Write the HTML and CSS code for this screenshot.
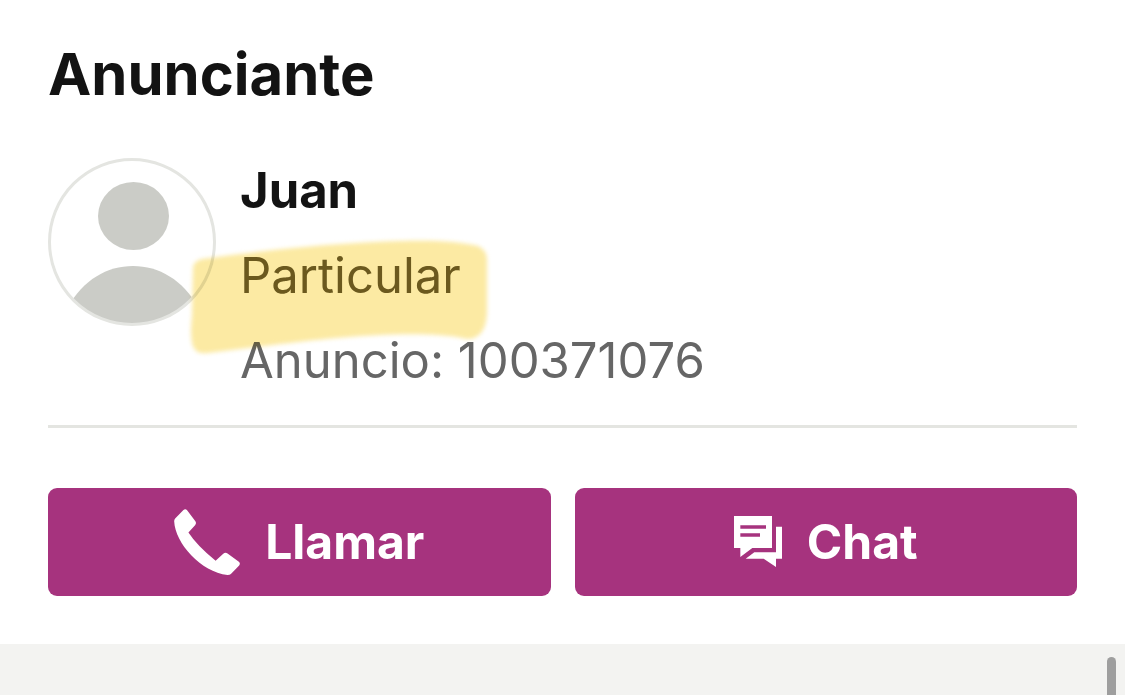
FILE: index.html
```html
<!DOCTYPE html>
<html lang="es">
<head>
    <meta charset="UTF-8">
    <meta name="viewport" content="width=device-width, initial-scale=1.0">
    <title>Anunciante</title>
    <link rel="stylesheet" href="styles.css">
</head>
<body>
    <main class="advertiser">
        <h1 class="advertiser-title">Anunciante</h1>

        <div class="profile">
            <svg class="avatar" viewBox="0 0 168 168" aria-hidden="true">
                <clipPath id="avatar-clip"><circle cx="84" cy="84" r="82"/></clipPath>
                <g fill="#cbccc7" clip-path="url(#avatar-clip)">
                    <ellipse cx="85.5" cy="58" rx="35.5" ry="34"/>
                    <path d="M20 149C35 122 59 108 85 108s50 14 65 41v19H20z"/>
                </g>
                <circle cx="84" cy="84" r="82.5" fill="none" stroke="#e4e5e1" stroke-width="3"/>
            </svg>
            <div class="profile-info">
                <p class="profile-name">Juan</p>
                <p class="profile-type">Particular
                    <!-- marcador amarillo -->
                    <svg class="highlight" viewBox="0 0 304 120" aria-hidden="true">
                        <path d="M5 31Q6 25 14 23C80 14 145 7 210 5C245 4 270 5 290 10Q299 14 299 24V74Q299 97 286 102Q281 104 274 102C230 93 140 102 85 109L20 117Q6 119 4 107Q2 96 4 80Z"/>
                    </svg>
                </p>
                <p class="profile-ad">Anuncio: 100371076</p>
            </div>
        </div>

        <div class="actions">
            <button type="button" class="action">
                <svg class="icon-phone" viewBox="69 86 198 199" aria-hidden="true">
                    <path d="M72 115L97 89Q103 84 108 90L133 123Q137 129 132 135L112 157Q139 198 194 242L217 221Q223 216 230 220L263 244Q270 249 265 256L240 282Q237 285 230 285C150 276 72 190 69 123Q69 118 72 115Z"/>
                </svg>
                <span>Llamar</span>
            </button>
            <button type="button" class="action">
                <svg class="icon-chat" viewBox="102 108 144 153" aria-hidden="true">
                    <path fill-rule="evenodd" d="M102 108H216V204H157L121 231V204H102ZM121 136V146H198V136ZM121 160V170H180V160Z"/>
                    <path d="M228 140H246V236H228V261L191 236H137L163 217H228Z"/>
                </svg>
                <span>Chat</span>
            </button>
        </div>
    </main>

    <div class="page-rest">
        <div class="scroll-thumb"></div>
    </div>
</body>
</html>
```
FILE: styles.css
```css
* {
    margin: 0;
    padding: 0;
    box-sizing: border-box;
}

body {
    display: flex;
    flex-direction: column;
    height: 100vh;
    overflow: hidden;
    background: #fff;
    color: #131313;
    font-family: Inter, "Liberation Sans", sans-serif;
}

.advertiser {
    padding: 38px 48px 48px;
}

.advertiser-title {
    font-size: 58px;
    line-height: 72px;
    font-weight: 700;
}

.profile {
    display: flex;
    gap: 24px;
    padding: 38px 0 22px;
    border-bottom: 3px solid #e4e5e1;
}

.avatar {
    flex: none;
    width: 168px;
    height: 168px;
    margin-top: 10px;
}

.profile-info {
    font-size: 49px;
    line-height: 85px;
    color: #666;
}

.profile-name {
    font-weight: 700;
    color: #131313;
}

.profile-type {
    position: relative;
    color: #6c612e;
}

.highlight {
    position: absolute;
    top: 3px;
    left: -52px;
    width: 304px;
    height: 120px;
    fill: #fceaa3;
    mix-blend-mode: multiply;
    filter: blur(2px);
    pointer-events: none;
}

.actions {
    display: grid;
    grid-template-columns: 1fr 1fr;
    gap: 24px;
    margin-top: 60px;
}

.action {
    display: flex;
    justify-content: center;
    align-items: center;
    gap: 25px;
    height: 108px;
    padding-bottom: 1px;
    border: none;
    border-radius: 9px;
    background: #a6337e;
    color: #fff;
    font-family: inherit;
    font-size: 48px;
    font-weight: 700;
    cursor: pointer;
}

.action svg {
    fill: #fff;
}

.icon-phone {
    width: 66px;
    height: 66px;
}

.icon-chat {
    width: 48px;
    height: 51px;
}

.page-rest {
    position: relative;
    flex: 1;
    background: #f3f3f1;
}

.scroll-thumb {
    position: absolute;
    top: 13px;
    right: 9px;
    bottom: -9px;
    width: 9px;
    border-radius: 5px;
    background: #9e9e9e;
}
```
